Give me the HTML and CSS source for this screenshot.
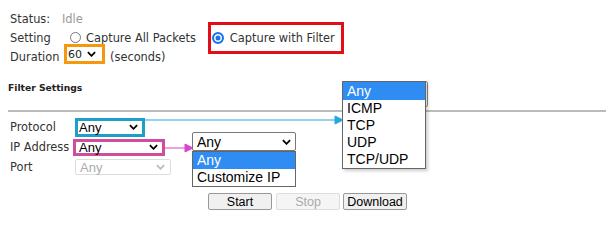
FILE: index.html
```html
<!DOCTYPE html>
<html lang="en">
<head>
<meta charset="UTF-8">
<meta name="viewport" content="width=device-width, initial-scale=1.0">
<title>Packet Capture</title>
<link rel="stylesheet" href="styles.css">
</head>
<body>
<div class="page">
    <div class="status">
        <div class="row">
            <span class="lbl lbl-status">Status:</span>
            <span class="idle">Idle</span>
        </div>
        <div class="row">
            <span class="lbl lbl-setting">Setting</span>
            <label class="opt"><span class="radio"></span>Capture All Packets</label>
            <label class="opt mark-red"><span class="radio on"></span>Capture with Filter</label>
        </div>
        <div class="row">
            <span class="lbl lbl-duration">Duration</span>
            <span class="sel mark-orange">60 <svg class="chev" viewBox="0 0 10 6"><path d="M1 1 L5 5 L9 1"/></svg></span>
            <span class="unit">(seconds)</span>
        </div>
    </div>

    <h4 class="section">Filter Settings</h4>
    <div class="rule"></div>

    <div class="filters">
        <div class="row">
            <span class="lbl lbl-filter">Protocol</span>
            <span class="sel mark-cyan">Any <svg class="chev" viewBox="0 0 10 6"><path d="M1 1 L5 5 L9 1"/></svg></span>
        </div>
        <div class="row">
            <span class="lbl lbl-ip">IP Address</span>
            <span class="sel mark-pink">Any <svg class="chev" viewBox="0 0 10 6"><path d="M1 1 L5 5 L9 1"/></svg></span>
        </div>
        <div class="row">
            <span class="lbl lbl-filter">Port</span>
            <span class="sel sel-off">Any <svg class="chev" viewBox="0 0 10 6"><path d="M1 1 L5 5 L9 1"/></svg></span>
        </div>
    </div>

    <div class="actions">
        <button class="btn">Start</button>
        <button class="btn btn-off" disabled>Stop</button>
        <button class="btn">Download</button>
    </div>

    <!-- annotation arrows -->
    <svg class="arrow arrow-cyan" viewBox="0 0 200 10">
        <line x1="0" y1="5" x2="192" y2="5"/>
        <polygon points="190,1 198,5 190,9"/>
    </svg>
    <svg class="arrow arrow-pink" viewBox="0 0 30 10">
        <line x1="0" y1="5" x2="22" y2="5"/>
        <polygon points="21,1 29,5 21,9"/>
    </svg>

    <!-- opened protocol list -->
    <div class="ghost"></div>
    <ul class="menu menu-proto">
        <li class="hl">Any</li>
        <li>ICMP</li>
        <li>TCP</li>
        <li>UDP</li>
        <li>TCP/UDP</li>
    </ul>

    <!-- opened ip list -->
    <div class="ip-drop">
        <span class="sel sel-plain">Any <svg class="chev" viewBox="0 0 10 6"><path d="M1 1 L5 5 L9 1"/></svg></span>
        <ul class="menu menu-ip">
            <li class="hl">Any</li>
            <li>Customize IP</li>
        </ul>
    </div>
</div>
</body>
</html>
```

FILE: styles.css
```css
body {
    margin: 0;
    background: #fff;
    font-family: "DejaVu Sans", Verdana, sans-serif;
    font-size: 11.4px;
    color: #333;
}
.page {
    position: relative;
    width: 615px;
    height: 246px;
    overflow: hidden;
}
.status {
    padding: 9px 0 0 10px;
}
.row {
    display: flex;
    align-items: center;
    height: 19px;
    white-space: nowrap;
}
.lbl-status { width: 52px; }
.lbl-setting { width: 60px; }
.lbl-duration { width: 54px; }
.idle { color: #999; }

.opt {
    display: flex;
    align-items: center;
}
.radio {
    width: 9px;
    height: 9px;
    border: 1px solid #777;
    border-radius: 50%;
    margin-right: 5px;
}
.radio.on {
    width: 8px;
    height: 8px;
    border: 2px solid #1a73e8;
    background: #1a73e8;
    box-shadow: inset 0 0 0 1.5px #fff;
    margin-right: 6px;
}
.mark-red {
    margin-left: 12px;
    height: 26px;
    padding: 0 6px 0 1px;
    border: 3px solid #e30d17;
}

.sel {
    display: flex;
    align-items: center;
    justify-content: space-between;
    box-sizing: border-box;
    font-family: "Liberation Sans", Arial, sans-serif;
    font-size: 13px;
    color: #000;
    background: #fff;
}
.chev {
    width: 9px;
    height: 6px;
    fill: none;
    stroke: #000;
    stroke-width: 2;
}
.mark-orange {
    width: 41px;
    height: 20px;
    margin-bottom: 5px;
    padding: 0 6px 0 1px;
    border: 3px solid #f5980f;
    font-family: "DejaVu Sans", Verdana, sans-serif;
    font-size: 11px;
    color: #222;
}
.unit { margin-left: 5px; }

.section {
    margin: 16px 0 0 8px;
    font-size: 9.2px;
    line-height: 12px;
    font-weight: bold;
    color: #222;
}
.rule {
    margin: 16px 0 0 8px;
    width: 598px;
    height: 2px;
    background: #bbb;
}

.filters {
    margin-top: 5px;
    padding-left: 10px;
}
.filters .row { height: 20px; }
.lbl-filter { width: 65px; }
.lbl-ip { width: 63px; }
.mark-cyan {
    width: 70px;
    height: 19px;
    padding: 0 4px 0 1px;
    border: 3px solid #1e9fc8;
}
.mark-pink {
    width: 92px;
    height: 17px;
    padding: 0 4px 0 3px;
    border: 3px solid #cf4c9f;
}
.sel-off {
    width: 96px;
    height: 16px;
    padding: 0 5px 0 4px;
    border: 1px solid #ddd;
    border-radius: 2px;
    color: #aaa;
}
.sel-off .chev { stroke: #bbb; }

.actions {
    display: flex;
    margin-top: 16px;
    padding-left: 208px;
}
.btn {
    box-sizing: border-box;
    height: 17px;
    width: 64px;
    padding: 0;
    margin-right: 4px;
    border: 1px solid #999;
    border-radius: 2px;
    background: #f0f0f0;
    font-family: "Liberation Sans", Arial, sans-serif;
    font-size: 12.5px;
    color: #000;
}
.btn-off {
    margin-right: 3px;
    border-color: #ddd;
    background: #f5f5f5;
    color: #aaa;
}

.arrow {
    position: absolute;
    height: 10px;
}
.arrow-cyan {
    left: 145px;
    top: 115px;
    width: 200px;
    stroke: #27a7e0;
    fill: #27a7e0;
}
.arrow-pink {
    left: 164px;
    top: 143px;
    width: 30px;
    stroke: #d944cc;
    fill: #d944cc;
}

.menu {
    list-style: none;
    margin: 0;
    padding: 0;
    background: #fff;
    border: 1px solid #666;
    font-family: "Liberation Sans", Arial, sans-serif;
    font-size: 14px;
    color: #000;
}
.menu li {
    padding-left: 4px;
    line-height: 17px;
}
.menu li.hl {
    background: #2f8cf3;
    color: #fff;
}
.ghost {
    position: absolute;
    left: 342px;
    top: 81px;
    width: 84px;
    height: 24px;
    border: 1px solid #888;
    border-radius: 2px;
}
.menu-proto {
    position: absolute;
    left: 342px;
    top: 81px;
    width: 82px;
    box-shadow: 2px 2px 3px rgba(0, 0, 0, 0.2);
}
.menu-proto li.hl { line-height: 18px; }

.ip-drop {
    position: absolute;
    left: 192px;
    top: 132px;
    width: 104px;
}
.sel-plain {
    width: 104px;
    height: 19px;
    padding: 0 4px 0 4px;
    border: 1px solid #777;
    border-radius: 2px;
    font-size: 14px;
}
.menu-ip li { line-height: 17px; }
```
